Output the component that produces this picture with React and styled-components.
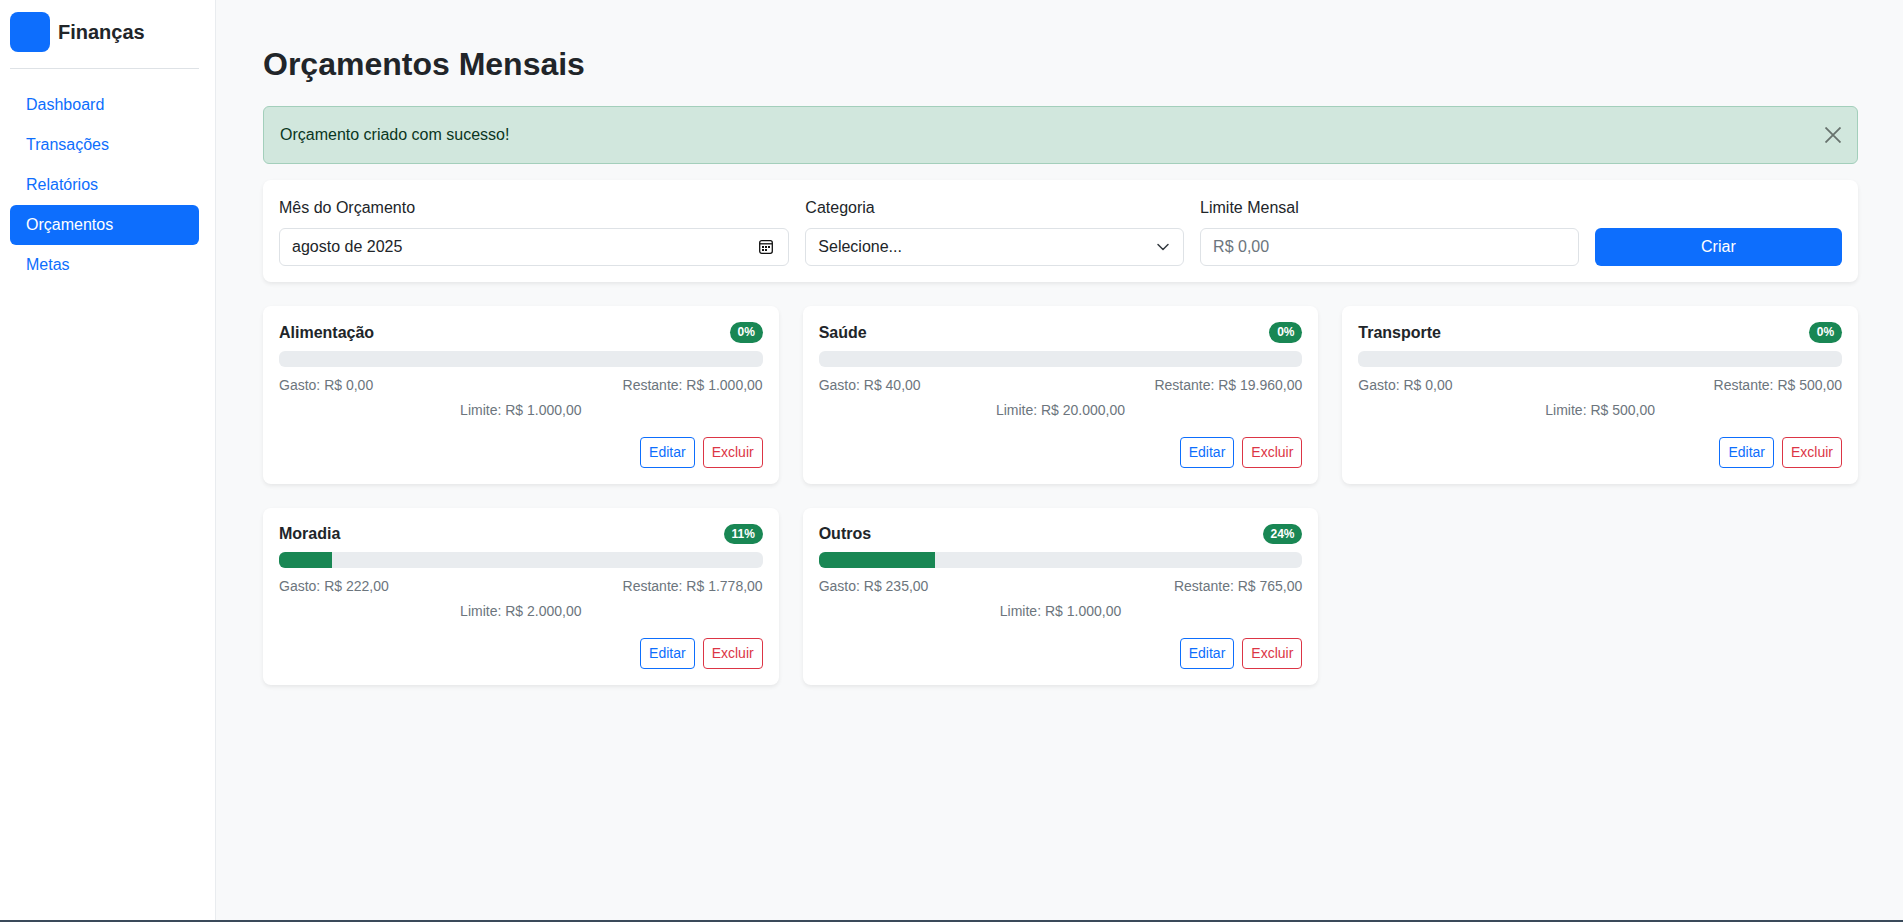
import React from "react";
import styled, { createGlobalStyle } from "styled-components";

const GlobalStyle = createGlobalStyle`
  * {
    box-sizing: border-box;
  }
  html,
  body {
    margin: 0;
    height: 100%;
    background: #3a4a5a;
  }
  body {
    font-family: "Liberation Sans", Arial, sans-serif;
    font-size: 16px;
    line-height: 1.5;
    color: #212529;
    overflow: hidden;
  }
`;

const Shell = styled.div`
  display: flex;
  height: 920px;
  background: #f8f9fa;
`;

const Sidebar = styled.aside`
  flex: 0 0 216px;
  padding: 12px 16px 12px 10px;
  background: #fff;
  border-right: 1px solid #e9ecef;
`;

const Brand = styled.div`
  display: flex;
  align-items: center;
  gap: 8px;
  height: 57px;
  padding-bottom: 16px;
  border-bottom: 1px solid #dee2e6;
  margin-bottom: 16px;
`;

const Logo = styled.div`
  width: 40px;
  height: 40px;
  border-radius: 8px;
  background: #0d6efd;
`;

const BrandName = styled.span`
  font-size: 20px;
  font-weight: 700;
`;

const NavList = styled.nav`
  display: flex;
  flex-direction: column;
`;

const NavItem = styled.a`
  height: 40px;
  padding: 8px 16px;
  border-radius: 6px;
  color: ${({ $active }) => ($active ? "#fff" : "#0d6efd")};
  background: ${({ $active }) => ($active ? "#0d6efd" : "transparent")};
`;

const Main = styled.main`
  flex: 1;
  padding: 45px 45px 0 47px;
`;

const Title = styled.h1`
  margin: 0 0 19px;
  font-size: 32px;
  font-weight: 700;
  line-height: 1.2;
  height: 42px;
`;

const Alert = styled.div`
  display: flex;
  align-items: center;
  justify-content: space-between;
  height: 58px;
  padding: 0 16px;
  margin-bottom: 16px;
  color: #0a3622;
  background: #d1e7dd;
  border: 1px solid #a3cfbb;
  border-radius: 6px;
`;

const CloseIcon = styled.svg`
  width: 16px;
  height: 16px;
  fill: none;
  stroke: #000;
  stroke-width: 1.8;
  opacity: 0.5;
`;

const Panel = styled.section`
  background: #fff;
  border-radius: 8px;
  box-shadow: 0 2px 4px rgba(0, 0, 0, 0.075);
`;

const FormPanel = styled(Panel)`
  padding: 16px;
  margin-bottom: 24px;
`;

const FormRow = styled.form`
  display: flex;
  align-items: flex-end;
  margin: 0 -8px;
`;

const FormCol = styled.div`
  flex: 0 0 ${({ $span }) => ($span / 12) * 100}%;
  padding: 0 8px;
`;

const Label = styled.label`
  display: block;
  margin-bottom: 8px;
`;

const FieldBox = styled.div`
  display: flex;
  align-items: center;
  justify-content: space-between;
  height: 38px;
  padding: 0 12px;
  background: #fff;
  border: 1px solid #dee2e6;
  border-radius: 6px;
`;

const PlaceholderText = styled.span`
  color: #6c757d;
`;

const CalendarSvg = styled.svg`
  width: 14px;
  height: 14px;
  margin-right: 3px;
`;

const ChevronSvg = styled.svg`
  width: 16px;
  height: 16px;
`;

const CreateButton = styled.button`
  width: 100%;
  height: 38px;
  font: inherit;
  color: #fff;
  background: #0d6efd;
  border: 0;
  border-radius: 6px;
`;

const BudgetGrid = styled.div`
  display: grid;
  grid-template-columns: repeat(3, 1fr);
  gap: 24px;
`;

const BudgetCard = styled(Panel)`
  padding: 16px;
`;

const CardHeader = styled.div`
  display: flex;
  align-items: center;
  justify-content: space-between;
  margin-bottom: 8px;
`;

const CardTitle = styled.h3`
  margin: 0;
  font-size: 16px;
  font-weight: 700;
  line-height: 1.2;
`;

const Badge = styled.span`
  padding: 4.25px 7.8px;
  font-size: 12px;
  font-weight: 700;
  line-height: 1;
  color: #fff;
  background: #198754;
  border-radius: 11px;
`;

const Track = styled.div`
  height: 16px;
  overflow: hidden;
  background: #e9ecef;
  border-radius: 6px;
`;

const Fill = styled.div`
  height: 100%;
  background: #198754;
`;

const Stats = styled.div`
  display: flex;
  justify-content: space-between;
  margin-top: 8px;
  font-size: 14px;
  line-height: 21px;
  color: #6c757d;
`;

const LimitLine = styled.div`
  margin-top: 4px;
  font-size: 14px;
  line-height: 21px;
  text-align: center;
  color: #6c757d;
`;

const Actions = styled.div`
  display: flex;
  justify-content: flex-end;
  gap: 8px;
  margin-top: 16px;
`;

const SmallButton = styled.button`
  height: 31px;
  padding: 0 8px;
  font: inherit;
  font-size: 14px;
  color: ${({ $color }) => $color};
  background: transparent;
  border: 1px solid ${({ $color }) => $color};
  border-radius: 4px;
`;

const navItems = ["Dashboard", "Transações", "Relatórios", "Orçamentos", "Metas"];

const budgets = [
  { name: "Alimentação", pct: 0, spent: "0,00", left: "1.000,00", limit: "1.000,00" },
  { name: "Saúde", pct: 0, spent: "40,00", left: "19.960,00", limit: "20.000,00" },
  { name: "Transporte", pct: 0, spent: "0,00", left: "500,00", limit: "500,00" },
  { name: "Moradia", pct: 11, spent: "222,00", left: "1.778,00", limit: "2.000,00" },
  { name: "Outros", pct: 24, spent: "235,00", left: "765,00", limit: "1.000,00" },
];

const CalendarIcon = () => (
  <CalendarSvg viewBox="0 0 14 14" fill="none">
    <rect x="0.7" y="0.7" width="12.6" height="12.6" rx="2" stroke="#111" strokeWidth="1.3" />
    <path d="M1 3.8h12" stroke="#111" strokeWidth="1.3" />
    <path d="M3 6h2v2H3zM6 6h2v2H6zM9 6h2v2H9zM3 9h2v2H3zM6 9h2v2H6z" fill="#111" />
  </CalendarSvg>
);

const ChevronIcon = () => (
  <ChevronSvg viewBox="0 0 16 16" fill="none" stroke="#343a40" strokeWidth="1.5" strokeLinecap="round" strokeLinejoin="round">
    <path d="m3 5.5 5 5 5-5" />
  </ChevronSvg>
);

const App = () => (
  <>
    <GlobalStyle />
    <Shell>
      <Sidebar>
        <Brand>
          <Logo />
          <BrandName>Finanças</BrandName>
        </Brand>
        <NavList>
          {navItems.map((item) => (
            <NavItem key={item} $active={item === "Orçamentos"}>
              {item}
            </NavItem>
          ))}
        </NavList>
      </Sidebar>
      <Main>
        <Title>Orçamentos Mensais</Title>
        <Alert>
          Orçamento criado com sucesso!
          <CloseIcon viewBox="0 0 16 16">
            <path d="M.5.5l15 15M15.5.5l-15 15" />
          </CloseIcon>
        </Alert>
        <FormPanel>
          <FormRow>
            <FormCol $span={4}>
              <Label>Mês do Orçamento</Label>
              <FieldBox>
                agosto de 2025
                <CalendarIcon />
              </FieldBox>
            </FormCol>
            <FormCol $span={3}>
              <Label>Categoria</Label>
              <FieldBox>
                Selecione...
                <ChevronIcon />
              </FieldBox>
            </FormCol>
            <FormCol $span={3}>
              <Label>Limite Mensal</Label>
              <FieldBox>
                <PlaceholderText>R$ 0,00</PlaceholderText>
              </FieldBox>
            </FormCol>
            <FormCol $span={2}>
              <CreateButton type="button">Criar</CreateButton>
            </FormCol>
          </FormRow>
        </FormPanel>
        <BudgetGrid>
          {budgets.map((b) => (
            <BudgetCard key={b.name}>
              <CardHeader>
                <CardTitle>{b.name}</CardTitle>
                <Badge>{b.pct}%</Badge>
              </CardHeader>
              <Track>
                <Fill style={{ width: `${b.pct}%` }} />
              </Track>
              <Stats>
                <span>Gasto: R$ {b.spent}</span>
                <span>Restante: R$ {b.left}</span>
              </Stats>
              <LimitLine>Limite: R$ {b.limit}</LimitLine>
              <Actions>
                <SmallButton type="button" $color="#0d6efd">Editar</SmallButton>
                <SmallButton type="button" $color="#dc3545">Excluir</SmallButton>
              </Actions>
            </BudgetCard>
          ))}
        </BudgetGrid>
      </Main>
    </Shell>
  </>
);

export default App;
